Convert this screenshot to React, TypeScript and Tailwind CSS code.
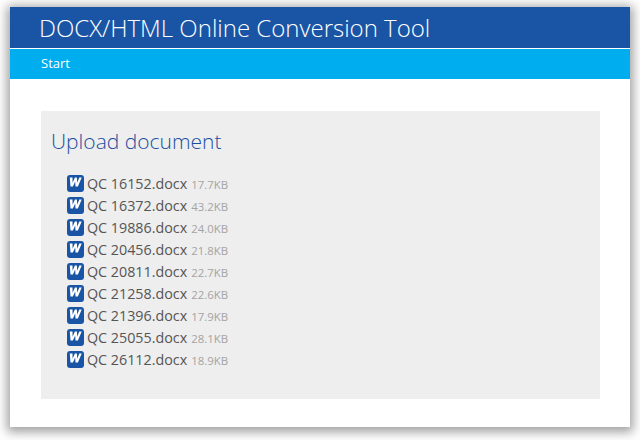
const files = [
  ["QC 16152.docx", "17.7KB"],
  ["QC 16372.docx", "43.2KB"],
  ["QC 19886.docx", "24.0KB"],
  ["QC 20456.docx", "21.8KB"],
  ["QC 20811.docx", "22.7KB"],
  ["QC 21258.docx", "22.6KB"],
  ["QC 21396.docx", "17.9KB"],
  ["QC 25055.docx", "28.1KB"],
  ["QC 26112.docx", "18.9KB"],
];

function WordIcon() {
  return (
    <svg width="17" height="17" viewBox="0 0 17 17" className="shrink-0 -mt-px">
      <rect x="0" y="0" width="17" height="17" rx="3" fill="#1a55a5" />
      <path
        d="M2.8 2.6h2.7l.1 5.2 2.3-5.2h2l.3 5.2 2.1-5.2h2.4l-3.8 9H8.5l-.3-5-2.3 5H3.5z"
        fill="#fff"
      />
    </svg>
  );
}

export default function App() {
  return (
    <div className="w-[640px] h-[440px] bg-white pt-[7px] pl-[10px] overflow-hidden font-['Open_Sans',sans-serif]">
      <div className="w-[620px] h-[420px] bg-white flex flex-col shadow-[0_2px_10px_3px_rgba(0,0,0,0.38)]">
        <div className="h-[41px] bg-[#1a55a5] pl-[29px] flex items-center">
          <span className="text-[24px] leading-[41px] font-light text-white">DOCX/HTML Online Conversion Tool</span>
        </div>
        <div className="h-px bg-white" />
        <div className="h-[30px] bg-[#00aeef] pl-[31px] flex items-center">
          <span className="text-[13px] text-white">Start</span>
        </div>
        <div className="flex-1 pt-[32px] pl-[31px] pr-[30px] pb-[28px]">
          <div className="h-full bg-[#eeeeee] pl-[10px] pt-[16px]">
            <h2 className="text-[21px] leading-[29px] font-light text-[#1a4fa0]">Upload document</h2>
            <ul className="mt-[17px] pl-[16px] flex flex-col">
              {files.map(([name, size]) => (
                <li key={name} className="h-[22px] flex items-center gap-[3px]">
                  <WordIcon />
                  <span className="text-[14.3px] leading-[22px] text-[#555555]">{name}</span>
                  <span className="text-[11.4px] leading-[22px] text-[#a4a4a4] mt-px ml-px">{size}</span>
                </li>
              ))}
            </ul>
          </div>
        </div>
      </div>
    </div>
  );
}
